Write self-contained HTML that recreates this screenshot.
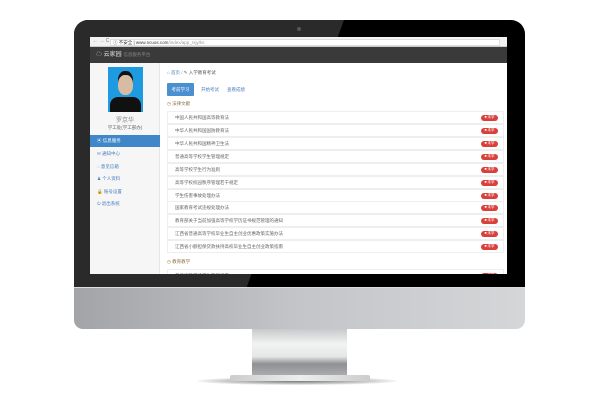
<!DOCTYPE html>
<html><head><meta charset="utf-8"><style>
*{margin:0;padding:0;box-sizing:border-box}
body{width:600px;height:400px;background:#fff;position:relative;overflow:hidden;font-family:"Liberation Sans","Noto Sans CJK SC",sans-serif}
.abs{position:absolute}
.bezel{left:74px;top:20px;width:451px;height:275px;background:#000;border-radius:14px 14px 0 0;overflow:hidden}
.gloss{top:0;width:330px;height:275px;background:#2a2a2a;transform:skewX(-20deg);transform-origin:top left;left:-60px}
.chin{left:74px;top:287px;width:451px;height:42px;border-radius:0 0 9px 9px;background:linear-gradient(90deg,#a3a4a8,#c4c5c8 50%,#d5d6d8);border-top:1px solid #ddd}
.neck{left:252px;top:329px;width:95px;height:50px;background:linear-gradient(180deg,#c8c9cb,#f2f3f3 30%,#e6e6e6 55%,#8f9093 70%,#b5b6b8);clip-path:polygon(0 0,100% 0,100% 70%,118% 95%,-18% 95%,0 70%)}
.base{left:230px;top:375px;width:140px;height:6px;background:linear-gradient(90deg,#ccc,#eee,#ccc);border-radius:2px}
.shadow{left:197px;top:377px;width:200px;height:8px;border-radius:50%;background:radial-gradient(ellipse,#777 0%,rgba(120,120,120,.4) 50%,rgba(255,255,255,0) 75%)}
.screen{left:90px;top:37px;width:417px;height:237px;background:#fff;overflow:hidden;font-size:4.5px;color:#555}
.bar{left:0;top:0;width:417px;height:10px;background:#f2f2f2;border-bottom:1px solid #ccc}
.url{left:20px;top:1.5px;width:390px;height:7px;background:#fff;border:1px solid #ddd;font-size:4.5px;line-height:5px;padding-left:2px;color:#333}
.hdr{left:0;top:10px;width:417px;height:16px;background:#3a3a3a;color:#ddd;font-size:6px;line-height:16px;padding-left:6px}
.hdr span{color:#888;font-size:4.5px}
.side{left:0;top:26px;width:70px;height:211px;background:#f6f6f6;border-right:1px solid #e6e6e6}
.photo{left:18px;top:4px;width:35px;height:45px;background:#1e9be0}
.head{left:10px;top:8px;width:15px;height:20px;background:#d8bba3;border-radius:45%;box-shadow:0 -4px 0 #111}
.body{left:2px;top:30px;width:31px;height:15px;background:#111;border-radius:8px 8px 0 0}
.nav{left:0;width:70px;height:12px;font-size:4.5px;line-height:12px;padding-left:7px;color:#4a7fc0}
.row{position:absolute;left:77px;width:337px;height:12.5px;border:1px solid #eee;font-size:4.5px;line-height:11px;padding-left:7px;color:#666}
.badge{position:absolute;right:5px;top:3px;width:17px;height:5.5px;background:#d9403a;border-radius:3px;color:#fff;font-size:3.5px;line-height:5.5px;text-align:center}
</style></head><body>
<div class="abs bezel"><div class="abs gloss"></div></div>
<div class="abs" style="left:297px;top:27px;width:4px;height:4px;border-radius:50%;background:#555"></div>
<div class="abs shadow"></div>
<div class="abs neck"></div>
<div class="abs base"></div>
<div class="abs chin"></div>
<div class="abs screen">
 <div class="abs bar"><span class="abs" style="left:3px;top:1px;color:#777;font-size:5px">← → C</span><div class="abs url">ⓘ 不安全 | www.ncuos.com<span style="color:#999">/index/app_rxjy/ks</span></div></div>
 <div class="abs hdr">☁ 云家园 <span>信息服务平台</span></div>
 <div class="abs side">
  <div class="abs photo"><div class="abs head"></div><div class="abs body"></div></div>
  <div class="abs" style="left:0;width:70px;top:52px;text-align:center;font-size:6px;color:#888">罗京华</div>
  <div class="abs" style="left:0;width:70px;top:62px;text-align:center;font-size:4.5px;color:#666">学工处(学工部办)</div>
  <div class="abs nav" style="top:72px;background:#3f87c9;color:#fff">▣ 信息服务</div>
  <div class="abs nav" style="top:85px">✉ 通知中心</div>
  <div class="abs nav" style="top:98px">◌ 意见信箱</div>
  <div class="abs nav" style="top:110px">♟ 个人资料</div>
  <div class="abs nav" style="top:123px">🔒 账号设置</div>
  <div class="abs nav" style="top:135px">⏻ 退出系统</div>
 </div>
 <div class="abs" style="left:77px;top:33px;font-size:4.5px;color:#4a7fc0">⌂ 首页 <span style="color:#999">/</span> <span style="color:#555">✎ 入学教育考试</span></div>
 <div class="abs" style="left:77px;top:46px;width:27px;height:13px;background:#4a8fd0;border-radius:1px;color:#fff;font-size:4.5px;line-height:13px;text-align:center">考前学习</div>
 <div class="abs" style="left:111px;top:50px;color:#4a7fc0">开始考试</div>
 <div class="abs" style="left:137px;top:50px;color:#4a7fc0">查看成绩</div>
 <div class="abs" style="left:77px;top:64px;color:#8a6d3b">◷ 法律文献</div>
 <div class="row" style="top:74px">中国人民共和国高等教育法<div class="badge">■ 未学</div></div>
 <div class="row" style="top:87px">中华人民共和国国防教育法<div class="badge">■ 未学</div></div>
 <div class="row" style="top:100px">中华人民共和国精神卫生法<div class="badge">■ 未学</div></div>
 <div class="row" style="top:113px">普通高等学校学生管理规定<div class="badge">■ 未学</div></div>
 <div class="row" style="top:126px">高等学校学生行为准则<div class="badge">■ 未学</div></div>
 <div class="row" style="top:139px">高等学校校园秩序管理若干规定<div class="badge">■ 未学</div></div>
 <div class="row" style="top:152px">学生伤害事故处理办法<div class="badge">■ 未学</div></div>
 <div class="row" style="top:164px">国家教育考试违规处理办法<div class="badge">■ 未学</div></div>
 <div class="row" style="top:177px">教育部关于当前加强高等学校学历证书规范管理的通知<div class="badge">■ 未学</div></div>
 <div class="row" style="top:190px">江西省普通高等学校毕业生自主创业优惠政策实施办法<div class="badge">■ 未学</div></div>
 <div class="row" style="top:203px">江西省小额担保贷款扶持高校毕业生自主创业政策指南<div class="badge">■ 未学</div></div>
 <div class="abs" style="left:77px;top:222px;color:#8a6d3b">◷ 教育教学</div>
 <div class="row" style="top:232px">普通高等学校学生管理规定<div class="badge">■ 未学</div></div>
</div>
</body></html>
